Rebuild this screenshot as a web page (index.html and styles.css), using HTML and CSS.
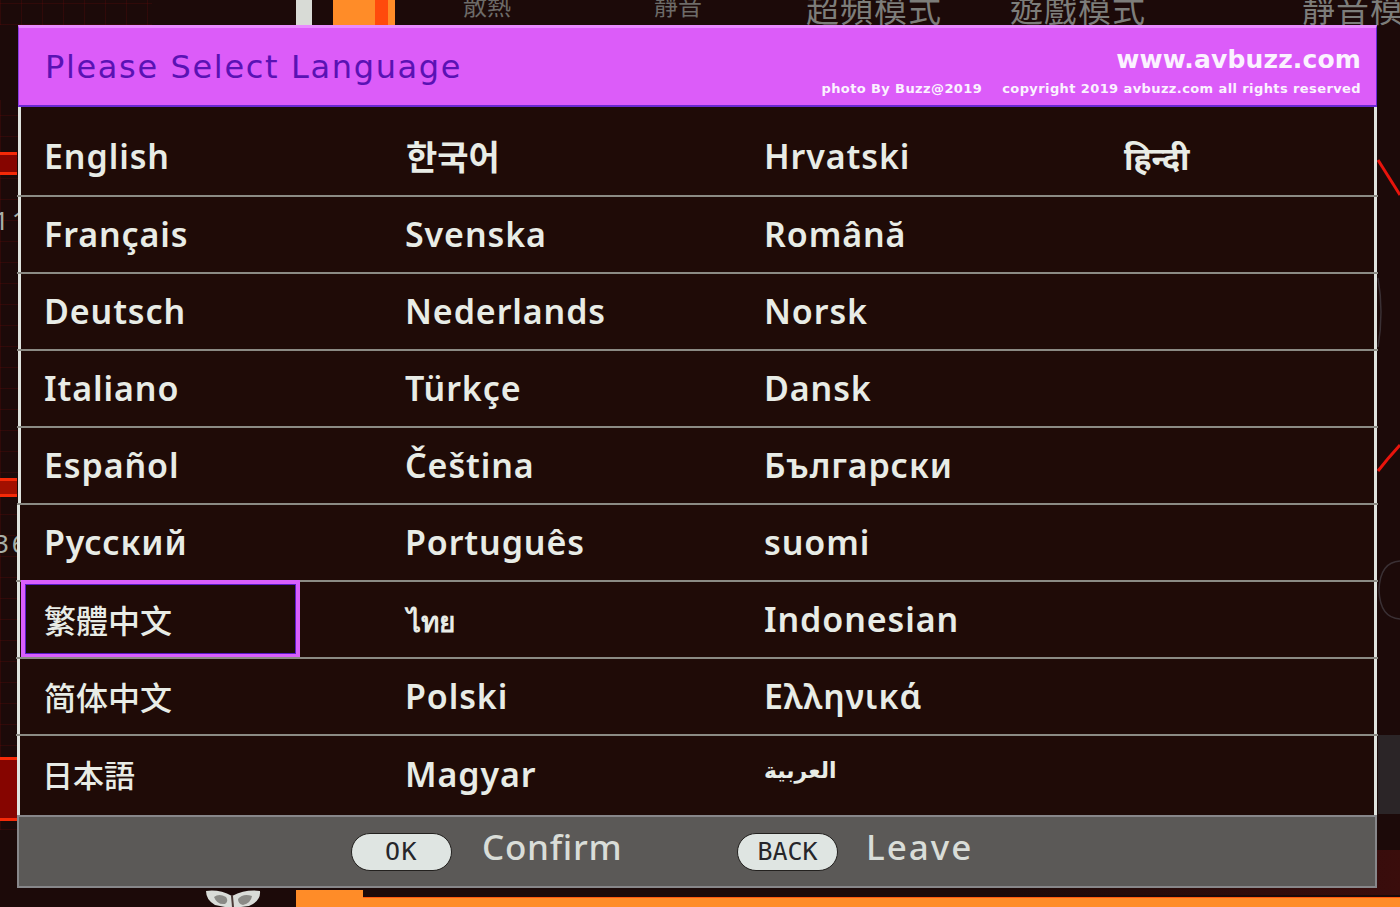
FILE: index.html
```html
<!DOCTYPE html>
<html lang="en">
<head>
<meta charset="utf-8">
<title>Please Select Language</title>
<link rel="stylesheet" href="styles.css">
</head>
<body>
<div class="backdrop" aria-hidden="true">
  <div class="grid-top"></div>
  <div class="grid-left"></div>
  <div class="red-bar bar-a"></div>
  <div class="red-bar bar-b"></div>
  <div class="red-bar bar-c"></div>
  <span class="edge-num num-a">1 1</span>
  <span class="edge-num num-b">3 6</span>
  <div class="chip chip-white"></div>
  <div class="chip chip-orange"></div>
  <div class="chip chip-red"></div>
  <span class="osd-tab tab-a">散熱</span>
  <span class="osd-tab tab-b">靜音</span>
  <span class="osd-tab tab-c">超頻模式</span>
  <span class="osd-tab tab-d">遊戲模式</span>
  <span class="osd-tab tab-e">靜音模</span>
  <svg class="arcs" viewBox="0 0 24 907" width="24" height="907">
    <path d="M2 160 Q12 176 24 195" fill="none" stroke="#e8140c" stroke-width="3"/>
    <path d="M2 471 Q12 458 24 445" fill="none" stroke="#e8140c" stroke-width="3"/>
    <path d="M2 278 Q8 312 2 347" fill="none" stroke="#3a3034" stroke-width="1.5"/>
    <path d="M24 561 Q4 562 3 590 Q4 618 24 619" fill="none" stroke="#3a3034" stroke-width="1.5"/>
  </svg>
  <div class="side-panel"></div>
  <div class="floor-glow"></div>
  <svg class="owl" viewBox="0 0 56 17" width="56" height="17">
    <path d="M1 1 Q14 -1 27 6 Q41 -1 55 1 Q56 11 44 16 L36 17 L20 17 L10 15 Q1 10 1 1Z" fill="#d9dcd8"/>
    <path d="M9 7 Q14 3 21 7 Q24 11 20 14 Q12 15 9 7Z M33 9 Q38 3 47 6 Q46 13 38 15 Q33 14 33 9Z" fill="#8a8a86"/>
    <path d="M27 6 L28 17" stroke="#4a3a36" stroke-width="2"/>
  </svg>
  <div class="orange-block"></div>
  <div class="orange-strip"></div>
</div>

<main class="dialog">
  <header class="title-bar">
    <h1 class="title">Please Select Language</h1>
    <div class="credits">
      <div class="site">www.avbuzz.com</div>
      <div class="credit-line">
        <span>photo By Buzz@2019</span>
        <span>copyright 2019 avbuzz.com all rights reserved</span>
      </div>
    </div>
  </header>

  <section class="rows">
    <div class="row first">
      <span class="item">English</span>
      <span class="item ko" lang="ko">한국어</span>
      <span class="item">Hrvatski</span>
      <span class="item hi" lang="hi">हिन्दी</span>
    </div>
    <div class="row">
      <span class="item">Français</span>
      <span class="item">Svenska</span>
      <span class="item">Română</span>
    </div>
    <div class="row">
      <span class="item">Deutsch</span>
      <span class="item">Nederlands</span>
      <span class="item">Norsk</span>
    </div>
    <div class="row">
      <span class="item">Italiano</span>
      <span class="item">Türkçe</span>
      <span class="item">Dansk</span>
    </div>
    <div class="row">
      <span class="item">Español</span>
      <span class="item">Čeština</span>
      <span class="item">Български</span>
    </div>
    <div class="row nudge">
      <span class="item">Русский</span>
      <span class="item">Português</span>
      <span class="item">suomi</span>
    </div>
    <div class="row nudge">
      <span class="item tc selected" lang="zh-Hant">繁體中文</span>
      <span class="item th" lang="th">ไทย</span>
      <span class="item">Indonesian</span>
    </div>
    <div class="row nudge">
      <span class="item sc" lang="zh-Hans">简体中文</span>
      <span class="item">Polski</span>
      <span class="item">Ελληνικά</span>
    </div>
    <div class="row nudge last">
      <span class="item jp" lang="ja">日本語</span>
      <span class="item">Magyar</span>
      <span class="item ar" lang="ar">العربية</span>
    </div>
  </section>

  <footer class="hints">
    <span class="key key-ok">OK</span>
    <span class="hint hint-ok">Confirm</span>
    <span class="key">BACK</span>
    <span class="hint hint-back">Leave</span>
  </footer>
</main>
</body>
</html>
```

FILE: styles.css
```css
* { box-sizing: border-box; }

html, body {
  margin: 0;
  width: 1400px;
  height: 907px;
  overflow: hidden;
}

body {
  position: relative;
  background: #1c0a09;
  font-family: "Noto Sans", "DejaVu Sans", sans-serif;
  padding: 25px 23px 0 18px;
}

/* ---------- picture behind the dialog ---------- */
.backdrop { position: absolute; inset: 0; overflow: hidden; }
.backdrop > * { position: absolute; }

.grid-top, .grid-left {
  background-image:
    repeating-linear-gradient(90deg, rgba(120, 10, 10, .22) 0 1px, transparent 1px 21px),
    repeating-linear-gradient(0deg, rgba(120, 10, 10, .22) 0 1px, transparent 1px 21px);
}
.grid-top { left: 0; top: 0; width: 152px; height: 25px; }
.grid-left { left: 0; top: 100px; width: 18px; height: 730px; }

.red-bar {
  left: 0;
  width: 17px;
  background: #860500;
  border-top: 3px solid #f52a08;
  border-bottom: 3px solid #f52a08;
}
.bar-a { top: 152px; height: 23px; }
.bar-b { top: 478px; height: 19px; background: #a31000; }
.bar-c { top: 757px; height: 64px; }

.edge-num {
  left: -6px;
  font: 26px/1 "Noto Sans", sans-serif;
  color: #a8b0a8;
  letter-spacing: -2px;
  width: 24px;
  white-space: nowrap;
  overflow: hidden;
}
.num-a { top: 207px; }
.num-b { top: 530px; }

.chip { top: 0; height: 25px; }
.chip-white { left: 296px; width: 16px; background: #d8dbd6; }
.chip-orange { left: 333px; width: 62px; background: #ff8c28; }
.chip-red { left: 375px; width: 13px; background: #ff4a0c; }

.osd-tab {
  font-family: "Noto Sans CJK TC", sans-serif;
  color: #7d7d7a;
  white-space: nowrap;
  line-height: 1;
}
.tab-a { left: 463px; top: -7px; font-size: 24px; color: #6d6b68; }
.tab-b { left: 654px; top: -7px; font-size: 24px; color: #6d6b68; }
.tab-c { left: 806px; top: -8px; font-size: 33px; letter-spacing: 1px; }
.tab-d { left: 1010px; top: -8px; font-size: 33px; letter-spacing: 1px; }
.tab-e { left: 1302px; top: -8px; font-size: 33px; letter-spacing: 1px; }

.arcs { left: 1376px; top: 0; }
.side-panel { left: 1378px; top: 735px; width: 22px; height: 79px; background: #2b2527; }
.floor-glow {
  left: 1000px; top: 850px; width: 400px; height: 45px;
  background: linear-gradient(90deg, transparent, #3a0d0c);
}
.owl { left: 205px; top: 890px; }
.orange-block { left: 296px; top: 890px; width: 67px; height: 17px; background: #ff8c28; }
.orange-strip { left: 363px; top: 897px; right: 0; height: 10px; background: #ff8c28; border-top: 1px solid #ff5a10; }

/* ---------- dialog ---------- */
.dialog {
  position: relative;
  width: 1359px;
}

.title-bar {
  height: 82px;
  display: flex;
  justify-content: space-between;
  background: #dc5cf9;
  border-top: 3px solid #e98bff;
  border-bottom: 2px solid #6a28d2;
  border-left: 1px solid #8a3ee0;
  border-right: 1px solid #6a28d2;
  padding: 0 15px 0 26px;
}

.title {
  margin: 20px 0 0;
  font-family: "DejaVu Sans", sans-serif;
  font-size: 32px;
  font-weight: 400;
  line-height: 38px;
  letter-spacing: 1.65px;
  color: #5a12b4;
}

.credits {
  display: flex;
  flex-direction: column;
  align-items: flex-end;
  color: #fbf2ff;
  font-family: "DejaVu Sans", sans-serif;
  font-weight: 700;
}

.site {
  margin-top: 17px;
  font-size: 25px;
  line-height: 30px;
  letter-spacing: .15px;
}

.credit-line {
  display: flex;
  gap: 20px;
  margin-top: 5px;
  font-size: 13px;
  line-height: 18px;
  letter-spacing: .4px;
}

.rows { display: flex; flex-direction: column; }

.row {
  position: relative;
  height: 77px;
  display: grid;
  grid-template-columns: 361px 359px 360px 1fr;
  align-items: center;
  border-left: 3px solid #dfe3de;
  border-right: 3px solid #dfe3de;
  background: #1f0b07;
  padding: 0 0 3px 23px;
}
.row::after {
  content: "";
  position: absolute;
  left: -4px;
  right: -4px;
  bottom: 0;
  height: 2px;
  background: #8b8b84;
}
.row.first { height: 90px; padding-top: 11px; }
.row.nudge { margin-left: -1px; padding-left: 24px; }
.row.last { height: 79px; }
.row.last::after { display: none; }

.item {
  position: relative;
  font-size: 34px;
  font-weight: 600;
  letter-spacing: .9px;
  line-height: 44px;
  color: #e8ece6;
  white-space: nowrap;
  justify-self: start;
}

.ko { font-family: "Noto Sans CJK KR", sans-serif; font-size: 34px; font-weight: 700; letter-spacing: 0; margin-left: 1px; }
.tc { font-family: "Noto Sans CJK TC", sans-serif; font-size: 32px; font-weight: 500; letter-spacing: 0; }
.sc { font-family: "Noto Sans CJK SC", sans-serif; font-size: 32px; font-weight: 500; letter-spacing: 0; }
.jp { font-family: "Noto Sans CJK JP", sans-serif; font-size: 31px; font-weight: 500; letter-spacing: 0; margin-left: -2px; }
.hi { font-size: 32px; font-weight: 700; letter-spacing: 0; top: 2px; }
.th { font-size: 28px; font-weight: 700; letter-spacing: 0; margin-left: 2px; top: 2px; }
.ar { font-family: "DejaVu Sans", sans-serif; font-size: 22px; font-weight: 700; letter-spacing: 0; top: -3px; }

.selected::before {
  content: "";
  box-sizing: border-box;
  position: absolute;
  left: -23px;
  top: -17px;
  width: 279px;
  height: 78px;
  border: 4px solid #d95ffb;
  outline: 1px solid #5a1cc8;
  outline-offset: -5px;
}

.hints {
  height: 73px;
  margin-left: -1px;
  display: flex;
  align-items: center;
  background: #5b5957;
  border: 2px solid #87878a;
  padding-left: 332px;
}

.key {
  width: 101px;
  height: 38px;
  display: flex;
  align-items: center;
  justify-content: center;
  border-radius: 19px;
  background: #dfe5e2;
  border: 1px solid #23211f;
  color: #26262a;
  font-family: "DejaVu Sans Mono", monospace;
  font-size: 25px;
}
.key-ok { letter-spacing: 1.5px; }

.hint {
  margin-left: 30px;
  font-size: 35px;
  font-weight: 500;
  color: #d9ddd8;
  line-height: 40px;
  position: relative;
  top: -5px;
}
.hint-ok { width: 255px; letter-spacing: .7px; }
.hint-back { margin-left: 28px; letter-spacing: 2px; }
```
